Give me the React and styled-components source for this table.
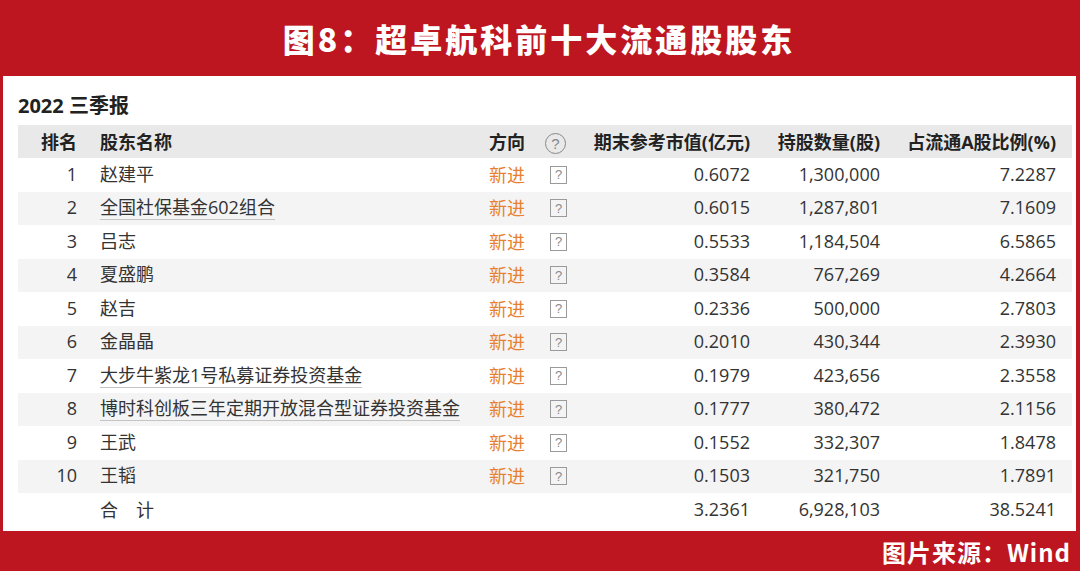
import React from "react";
import styled, { createGlobalStyle } from "styled-components";

const GlobalStyle = createGlobalStyle`
  html, body { margin: 0; padding: 0; background: #bd1620; }
  body { font-family: "Open Sans", "Noto Sans CJK SC", sans-serif; }
`;

const RED = "#bd1620";

const Page = styled.div`
  width: 1080px;
  height: 571px;
  background: ${RED};
  display: flex;
  flex-direction: column;
  overflow: hidden;
`;

const TitleBar = styled.div`
  height: 76px;
  display: flex;
  align-items: center;
  justify-content: center;
  color: #fff;
  font-family: "Noto Sans CJK SC", sans-serif;
  font-weight: 900;
  font-size: 32px;
  letter-spacing: 3px;
  padding-right: 2px;
`;

const Panel = styled.div`
  height: 455px;
  margin: 0 4px 0 3px;
  background: #fff;
  padding: 0 4px 0 15px;
  box-sizing: border-box;
  color: #333;
`;

const Period = styled.div`
  height: 49px;
  box-sizing: border-box;
  padding-top: 16px;
  line-height: 27px;
  font-family: "Open Sans", "Noto Sans CJK SC", sans-serif;
  font-weight: 700;
  font-size: 20px;
  color: #222;
`;

const Row = styled.div`
  display: grid;
  grid-template-columns: 70px 401px 56px 35px 170px 130px 176px;
  padding-right: 16px;
  height: ${(p) => (p.$head ? "33px" : "33.5px")};
  align-items: center;
  background: ${(p) => (p.$head ? "#e9e9e9" : p.$alt ? "#f4f4f4" : "#fff")};
  font-size: 18px;
  font-weight: ${(p) => (p.$head ? 700 : 400)};
  color: ${(p) => (p.$head ? "#222" : "#333")};
  white-space: nowrap;
`;

const Cell = styled.div`
  padding-right: ${(p) => p.$pr || 0}px;
  padding-left: ${(p) => p.$pl || 0}px;
  display: flex;
  justify-content: ${(p) => (p.$align === "right" ? "flex-end" : "flex-start")};
  align-items: center;
  margin-top: -2px;
`;

const Name = styled.span`
  line-height: 22px;
  border-bottom: ${(p) => (p.$link ? "1.5px solid #c4c4c4" : "none")};
  padding-bottom: ${(p) => (p.$link ? "1px" : "0")};
  margin-top: ${(p) => (p.$link ? "2px" : "0")};
`;

const Direction = styled.span`
  color: #e8812f;
`;

const QBox = styled.span`
  width: 17px;
  height: 18px;
  box-sizing: border-box;
  border: 1px solid #9a9a9a;
  display: inline-flex;
  align-items: center;
  justify-content: center;
  font-size: 13px;
  color: #8a8a8a;
  font-weight: 400;
  margin-left: 5px;
  margin-top: 2px;
  font-family: "Liberation Sans", sans-serif;
`;

const QCircle = styled.span`
  width: 21px;
  height: 21px;
  box-sizing: border-box;
  border: 1.3px solid #888;
  border-radius: 50%;
  display: inline-flex;
  align-items: center;
  justify-content: center;
  font-size: 15px;
  color: #888;
  font-weight: 400;
  margin-top: 5px;
  font-family: "Liberation Sans", sans-serif;
`;

const Footer = styled.div`
  flex: 1;
  display: flex;
  align-items: center;
  justify-content: flex-end;
  padding-right: 9px;
  color: #fff;
  font-family: "Noto Sans CJK SC", sans-serif;
  font-weight: 700;
  font-size: 24px;
  letter-spacing: 1px;
`;

const rows = [
  ["1", "赵建平", false, "0.6072", "1,300,000", "7.2287"],
  ["2", "全国社保基金602组合", true, "0.6015", "1,287,801", "7.1609"],
  ["3", "吕志", false, "0.5533", "1,184,504", "6.5865"],
  ["4", "夏盛鹏", false, "0.3584", "767,269", "4.2664"],
  ["5", "赵吉", false, "0.2336", "500,000", "2.7803"],
  ["6", "金晶晶", false, "0.2010", "430,344", "2.3930"],
  ["7", "大步牛紫龙1号私募证券投资基金", true, "0.1979", "423,656", "2.3558"],
  ["8", "博时科创板三年定期开放混合型证券投资基金", true, "0.1777", "380,472", "2.1156"],
  ["9", "王武", false, "0.1552", "332,307", "1.8478"],
  ["10", "王韬", false, "0.1503", "321,750", "1.7891"],
];

export default function App() {
  return (
    <>
      <GlobalStyle />
      <Page>
        <TitleBar>图8：超卓航科前十大流通股股东</TitleBar>
        <Panel>
          <Period>2022 三季报</Period>
          <Row $head>
            <Cell $align="right" $pr={11}>排名</Cell>
            <Cell $pl={12}>股东名称</Cell>
            <Cell>方向</Cell>
            <Cell><QCircle>?</QCircle></Cell>
            <Cell $align="right">期末参考市值(亿元)</Cell>
            <Cell $align="right">持股数量(股)</Cell>
            <Cell $align="right">占流通A股比例(%)</Cell>
          </Row>
          {rows.map((r, i) => (
            <Row key={r[0]} $alt={i % 2 === 1}>
              <Cell $align="right" $pr={11}>{r[0]}</Cell>
              <Cell $pl={12}><Name $link={r[2]}>{r[1]}</Name></Cell>
              <Cell><Direction>新进</Direction></Cell>
              <Cell><QBox>?</QBox></Cell>
              <Cell $align="right">{r[3]}</Cell>
              <Cell $align="right">{r[4]}</Cell>
              <Cell $align="right">{r[5]}</Cell>
            </Row>
          ))}
          <Row>
            <Cell />
            <Cell $pl={12}>合　计</Cell>
            <Cell />
            <Cell />
            <Cell $align="right">3.2361</Cell>
            <Cell $align="right">6,928,103</Cell>
            <Cell $align="right">38.5241</Cell>
          </Row>
        </Panel>
        <Footer>图片来源：Wind</Footer>
      </Page>
    </>
  );
}
